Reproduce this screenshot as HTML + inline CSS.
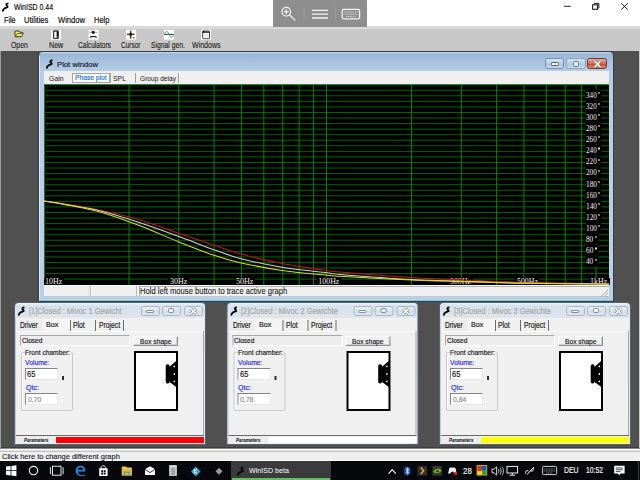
<!DOCTYPE html>
<html><head><meta charset="utf-8">
<style>
*{margin:0;padding:0;box-sizing:border-box}
html,body{width:640px;height:480px;overflow:hidden;background:#fff}
body{position:relative;font-family:"Liberation Sans",sans-serif;font-size:8px;color:#000}
.a{position:absolute}
.t{position:absolute;white-space:nowrap;line-height:1;transform-origin:0 0}
svg{overflow:visible}
</style></head><body>
<!-- toolbar -->
<div class="a" style="left:0;top:26px;width:640px;height:3px;background:#d9d9d9"></div>
<div class="a" style="left:0;top:29px;width:640px;height:22px;background:#c8c8c8"></div>
<!-- MDI -->
<div class="a" style="left:0;top:51px;width:640px;height:397px;background:#505050"></div>
<div class="a" style="left:0;top:447px;width:640px;height:1px;background:#3e3e3e"></div>
<div class="a" style="left:0;top:51px;width:1px;height:397px;background:#9c9c9c"></div>
<div class="a" style="left:638.5px;top:51px;width:1.5px;height:397px;background:#c8c8c8"></div>
<div class="a" style="left:0;top:448px;width:640px;height:1px;background:#8a8a8a"></div>
<div class="a" style="left:0;top:449px;width:640px;height:1px;background:#fcfcfc"></div>
<div class="a" style="left:0;top:450px;width:640px;height:1px;background:#e4e4e4"></div>
<div class="a" style="left:0;top:451px;width:640px;height:1px;background:#c2c2c2"></div>
<div class="a" style="left:0;top:452px;width:640px;height:8px;background:#efefef"></div>
<div class="a" style="left:0;top:460px;width:640px;height:1px;background:#fafafa"></div>
<!-- taskbar -->
<div class="a" style="left:0;top:461px;width:640px;height:19px;background:#06080c"></div>
<div class="a" style="left:231px;top:461px;width:100px;height:19px;background:#3b3b3d"></div>
<div class="a" style="left:232px;top:478px;width:98px;height:2px;background:#60c060"></div>
<!-- title icon -->
<svg class="a" style="left:0;top:0" width="12" height="14"><path d="M7.7,3.5 C6.3,3.6 6.0,4.8 6.6,5.4 C7.6,6.1 8.3,6.6 7.3,7.3 C6.3,7.9 4.7,7.9 3.9,8.8 C3.3,9.4 3.0,10.2 2.9,10.8" fill="none" stroke="#000" stroke-width="1.75" stroke-linecap="round"/></svg>
<!-- magnifier overlay -->
<div class="a" style="left:273px;top:0;width:93.5px;height:26.5px;background:#8e8e8e"></div>
<svg class="a" style="left:273px;top:0" width="94" height="27">
 <circle cx="13.3" cy="11.7" r="4.3" fill="none" stroke="#f2f2f2" stroke-width="1.2"/>
 <path d="M16.4,14.8 L22.3,20.6 M13.3,9.3V14.1 M10.9,11.7H15.7" stroke="#f2f2f2" stroke-width="1.2"/>
 <path d="M31.1,7V20 M62.6,7V20" stroke="#9c9c9c" stroke-width="1"/>
 <path d="M39,10.3H55 M39,14.1H55 M39,18H55" stroke="#f2f2f2" stroke-width="1.3"/>
 <rect x="69.2" y="9.4" width="17.4" height="9.4" rx="1.5" fill="none" stroke="#f2f2f2" stroke-width="1.3"/>
 <path d="M71.5,12H84.5 M71.5,14.2H84.5 M73,16.4H83" stroke="#e8e8e8" stroke-width="0.9" stroke-dasharray="1 0.7"/>
</svg>
<!-- window controls -->
<svg class="a" style="left:556px;top:0" width="84" height="14">
 <path d="M8,6.3H14.7" stroke="#202020" stroke-width="1"/>
 <rect x="36.6" y="4.8" width="4.9" height="4.5" fill="none" stroke="#202020" stroke-width="1.1"/>
 <path d="M38.2,4.4V3.4H42.9V8H41.8" fill="none" stroke="#202020" stroke-width="1"/>
 <path d="M65.2,3.2L71.8,9.6 M71.8,3.2L65.2,9.6" stroke="#202020" stroke-width="1"/>
</svg>
<!-- toolbar icons -->
<svg class="a" style="left:0;top:26px" width="230" height="16">
 <!-- open folder -->
 <path d="M14.8,5.6 L16.6,4.8 L19.2,5.2 L19.8,6.2 L22.8,6.4 L21.6,10.6 L15.2,10.8 Z" fill="#e8e060" stroke="#303010" stroke-width="0.9"/>
 <path d="M15.4,10.6 L17.4,7.6 L23.4,7.6 L21.6,10.6Z" fill="#f0ec70" stroke="#404010" stroke-width="0.7"/>
 <!-- new -->
 <rect x="51.2" y="3.9" width="9.8" height="9.8" fill="#fff"/>
 <rect x="53" y="4.3" width="5.9" height="8.7" rx="1" fill="#3a3a3a"/>
 <rect x="54.2" y="5.8" width="2.4" height="6" fill="#fafafa"/>
 <rect x="57" y="5.9" width="1.3" height="3.8" fill="#000"/>
 <!-- calculators -->
 <rect x="88.6" y="4" width="9.9" height="9.6" fill="#fff"/>
 <path d="M89.5,6.2H97.4" stroke="#404040" stroke-width="0.9" stroke-dasharray="1.1 0.9"/>
 <ellipse cx="93.2" cy="6.3" rx="1.5" ry="1.6" fill="#181818"/>
 <path d="M89.8,11.5 L91.2,10.6 H95.2 L96.8,11.5" fill="none" stroke="#202020" stroke-width="1.2"/>
 <!-- cursor -->
 <rect x="126" y="3.9" width="10.1" height="9.8" fill="#fff"/>
 <path d="M130.7,4.8V12.5 M127,8.3H134.5" stroke="#d8b060" stroke-width="2.2" opacity="0.55"/>
 <path d="M130.7,4.8V12.5 M127,8.3H134.5" stroke="#181818" stroke-width="1.1"/>
 <rect x="129.4" y="7" width="2.6" height="2.6" fill="#282010"/>
 <rect x="133" y="11.2" width="1.6" height="1.3" fill="#c02040"/>
 <!-- signal gen -->
 <rect x="163.9" y="3.9" width="10" height="9.7" fill="#fff"/>
 <path d="M164.3,8.4H173.6" stroke="#202020" stroke-width="0.9"/>
 <path d="M164.5,8.4 C165.5,4.5 167.5,4.5 169,8.4 C170.5,12.3 172.5,12.3 173.5,8.4" fill="none" stroke="#30a050" stroke-width="1"/>
 <!-- windows -->
 <rect x="201" y="3.8" width="10" height="10.1" fill="#fff"/>
 <rect x="202.7" y="5.1" width="6.8" height="7.6" rx="0.8" fill="#ececec" stroke="#3a3a3a" stroke-width="1"/>
 <rect x="202.6" y="4.9" width="7" height="2.2" fill="#505050"/>
 <circle cx="203.4" cy="5.6" r="0.8" fill="#000"/>
 <rect x="203.9" y="7.6" width="4.4" height="4.2" fill="none" stroke="#fff" stroke-width="0.6"/>
</svg>

<!-- plot window frame -->
<div class="a" style="left:38px;top:51px;width:576px;height:251px;background:#3a3f45;border-radius:5px 5px 0 0"></div>
<div class="a" style="left:39px;top:52px;width:574px;height:249px;background:linear-gradient(#c6daee 0px,#9bb7d7 2px,#b6cde6 19px,#b8d0e8 100%);border-radius:4px 4px 0 0"></div>
<div class="a" style="left:40px;top:300px;width:573px;height:1px;background:#74cde8"></div>
<div class="a" style="left:39px;top:56px;width:1px;height:244px;background:#dcecfc"></div>
<svg class="a" style="left:43.7px;top:57.3px" width="12" height="14"><path d="M7.7,3.5 C6.3,3.6 6.0,4.8 6.6,5.4 C7.6,6.1 8.3,6.6 7.3,7.3 C6.3,7.9 4.7,7.9 3.9,8.8 C3.3,9.4 3.0,10.2 2.9,10.8" fill="none" stroke="#000" stroke-width="1.8" stroke-linecap="round"/></svg>
<!-- title buttons plot window -->
<div class="a" style="left:545.4px;top:58.2px;width:19px;height:11.2px;border:1px solid #7890a8;border-radius:2.5px;background:linear-gradient(#d8e6f2,#b4cce4 50%,#a4c0dc 51%,#c0d8ee)"></div>
<div class="a" style="left:566.4px;top:58.2px;width:19.2px;height:11.2px;border:1px solid #8ca4bc;border-radius:2.5px;background:linear-gradient(#cfdff0,#b8d0e8 50%,#aac4e0 51%,#c4dcf0)"></div>
<div class="a" style="left:587.2px;top:58.2px;width:20px;height:11.2px;border:1px solid #6a3a30;border-radius:2.5px;background:linear-gradient(#eaa898,#d86e58 50%,#c84028 51%,#e08a70)"></div>
<div class="a" style="left:551px;top:62.4px;width:8px;height:3.2px;background:#fff;border:0.8px solid #5a6878;border-radius:1.2px"></div>
<div class="a" style="left:572.6px;top:61px;width:6.6px;height:5.6px;background:#e4ecf4;border:1.3px solid #687480;border-radius:1.5px"></div>
<svg class="a" style="left:587px;top:58px" width="21" height="12"><path d="M7.4,2.9L13.6,9.1 M13.6,2.9L7.4,9.1" stroke="#7a3028" stroke-width="3" opacity="0.6"/><path d="M7.4,2.9L13.6,9.1 M13.6,2.9L7.4,9.1" stroke="#ffffff" stroke-width="1.8"/></svg>
<!-- tab strip -->
<div class="a" style="left:44px;top:70.6px;width:565px;height:13.4px;background:#efefef"></div>
<div class="a" style="left:71.8px;top:73.2px;width:38.4px;height:9.8px;background:#fff;border:1px solid #a6a6a6"></div>
<div class="a" style="left:110.4px;top:72.5px;width:1px;height:10.5px;background:#a8a8a8"></div>
<div class="a" style="left:135.2px;top:72.5px;width:1.2px;height:10.5px;background:#a0a0a0"></div>
<div class="a" style="left:178px;top:72.5px;width:1.2px;height:10.5px;background:#a0a0a0"></div>
<svg class="a" style="left:44px;top:84px" width="565" height="201" viewBox="0 0 565 201">
<rect x="0" y="0" width="565" height="201" fill="#000"/>
<path d="M0.5,0V201" stroke="#2a6a4a" stroke-width="1"/>
<path d="M0,0.70H565 M0,6.26H565 M0,11.81H565 M0,17.37H565 M0,22.92H565 M0,28.48H565 M0,34.03H565 M0,39.59H565 M0,45.14H565 M0,50.70H565 M0,56.26H565 M0,61.81H565 M0,67.37H565 M0,72.92H565 M0,78.48H565 M0,84.03H565 M0,89.59H565 M0,95.14H565 M0,100.70H565 M0,106.26H565 M0,111.81H565 M0,117.37H565 M0,122.92H565 M0,128.48H565 M0,134.03H565 M0,139.59H565 M0,145.14H565 M0,150.70H565 M0,156.26H565 M0,161.81H565 M0,167.37H565 M0,172.92H565 M0,178.48H565 M0,184.03H565 M0,189.59H565 M0,195.14H565" stroke="#006800" stroke-width="1" fill="none"/>
<path d="M85.04,0V201 M134.79,0V201 M170.08,0V201 M197.46,0V201 M219.83,0V201 M238.74,0V201 M255.12,0V201 M269.57,0V201 M282.50,0V201 M367.54,0V201 M417.29,0V201 M452.58,0V201 M479.96,0V201 M502.33,0V201 M521.24,0V201 M537.62,0V201 M552.07,0V201" stroke="#0a800a" stroke-width="1" fill="none"/>
<path d="M0,0.5H565" stroke="#1c8c1c" stroke-width="1"/>
<rect x="541.8" y="5.31" width="15.5" height="10.4" fill="#000"/>
<rect x="541.8" y="16.42" width="15.5" height="10.4" fill="#000"/>
<rect x="541.8" y="27.53" width="15.5" height="10.4" fill="#000"/>
<rect x="541.8" y="38.64" width="15.5" height="10.4" fill="#000"/>
<rect x="541.8" y="49.76" width="15.5" height="10.4" fill="#000"/>
<rect x="541.8" y="60.87" width="15.5" height="10.4" fill="#000"/>
<rect x="541.8" y="71.98" width="15.5" height="10.4" fill="#000"/>
<rect x="541.8" y="83.09" width="15.5" height="10.4" fill="#000"/>
<rect x="541.8" y="94.20" width="15.5" height="10.4" fill="#000"/>
<rect x="541.8" y="105.31" width="15.5" height="10.4" fill="#000"/>
<rect x="541.8" y="116.42" width="15.5" height="10.4" fill="#000"/>
<rect x="541.8" y="127.53" width="15.5" height="10.4" fill="#000"/>
<rect x="541.8" y="138.64" width="15.5" height="10.4" fill="#000"/>
<rect x="541.8" y="149.76" width="12.5" height="10.4" fill="#000"/>
<rect x="541.8" y="160.87" width="12.5" height="10.4" fill="#000"/>
<rect x="541.8" y="171.98" width="12.5" height="10.4" fill="#000"/>
</svg><div class="a" style="left:43.5px;top:278px;width:20.4px;height:6.5px;background:#000"></div>
<div class="a" style="left:168.2px;top:278px;width:20.7px;height:6.5px;background:#000"></div>
<div class="a" style="left:234.6px;top:278px;width:20.8px;height:6.5px;background:#000"></div>
<div class="a" style="left:317.0px;top:278px;width:24.2px;height:6.5px;background:#000"></div>
<div class="a" style="left:448.5px;top:278px;width:24.3px;height:6.5px;background:#000"></div>
<div class="a" style="left:515.0px;top:278px;width:24.3px;height:6.5px;background:#000"></div>
<div class="a" style="left:589.0px;top:278px;width:20.5px;height:6.5px;background:#000"></div>
<div class="t" style="left:44.86px;top:278px;font-size:7.88px;font-family:'Liberation Serif',serif;transform:scaleX(1.009);color:#f4f0e8;">10Hz</div>
<div class="t" style="left:169.88px;top:278px;font-size:7.88px;font-family:'Liberation Serif',serif;transform:scaleX(1.008);color:#f4f0e8;">30Hz</div>
<div class="t" style="left:236.2px;top:278px;font-size:7.88px;font-family:'Liberation Serif',serif;transform:scaleX(1.019);color:#f4f0e8;">50Hz</div>
<div class="t" style="left:318.37px;top:278px;font-size:7.88px;font-family:'Liberation Serif',serif;color:#f4f0e8;">100Hz</div>
<div class="t" style="left:450.19px;top:278px;font-size:7.88px;font-family:'Liberation Serif',serif;transform:scaleX(0.99);color:#f4f0e8;">300Hz</div>
<div class="t" style="left:516.61px;top:278px;font-size:7.88px;font-family:'Liberation Serif',serif;transform:scaleX(0.994);color:#f4f0e8;">500Hz</div>
<div class="t" style="left:590.36px;top:278px;font-size:7.88px;font-family:'Liberation Serif',serif;transform:scaleX(1.015);color:#f4f0e8;">1kHz</div>
<div class="t" style="left:586.21px;top:91px;font-size:8.56px;font-family:'Liberation Serif',serif;transform:scaleX(0.837);color:#f4f0e8;">340</div>
<div class="t" style="left:586.21px;top:102px;font-size:8.56px;font-family:'Liberation Serif',serif;transform:scaleX(0.837);color:#f4f0e8;">320</div>
<div class="t" style="left:586.21px;top:113px;font-size:8.56px;font-family:'Liberation Serif',serif;transform:scaleX(0.837);color:#f4f0e8;">300</div>
<div class="t" style="left:586.21px;top:124px;font-size:8.56px;font-family:'Liberation Serif',serif;transform:scaleX(0.837);color:#f4f0e8;">280</div>
<div class="t" style="left:586.21px;top:135px;font-size:8.56px;font-family:'Liberation Serif',serif;transform:scaleX(0.837);color:#f4f0e8;">260</div>
<div class="t" style="left:586.21px;top:146px;font-size:8.56px;font-family:'Liberation Serif',serif;transform:scaleX(0.837);color:#f4f0e8;">240</div>
<div class="t" style="left:586.21px;top:157px;font-size:8.56px;font-family:'Liberation Serif',serif;transform:scaleX(0.837);color:#f4f0e8;">220</div>
<div class="t" style="left:586.21px;top:168px;font-size:8.56px;font-family:'Liberation Serif',serif;transform:scaleX(0.837);color:#f4f0e8;">200</div>
<div class="t" style="left:585.91px;top:180px;font-size:8.56px;font-family:'Liberation Serif',serif;transform:scaleX(0.861);color:#f4f0e8;">180</div>
<div class="t" style="left:585.91px;top:191px;font-size:8.56px;font-family:'Liberation Serif',serif;transform:scaleX(0.861);color:#f4f0e8;">160</div>
<div class="t" style="left:585.91px;top:202px;font-size:8.56px;font-family:'Liberation Serif',serif;transform:scaleX(0.861);color:#f4f0e8;">140</div>
<div class="t" style="left:585.91px;top:213px;font-size:8.56px;font-family:'Liberation Serif',serif;transform:scaleX(0.861);color:#f4f0e8;">120</div>
<div class="t" style="left:585.91px;top:224px;font-size:8.56px;font-family:'Liberation Serif',serif;transform:scaleX(0.861);color:#f4f0e8;">100</div>
<div class="t" style="left:586.28px;top:235px;font-size:8.56px;font-family:'Liberation Serif',serif;transform:scaleX(0.845);color:#f4f0e8;">80</div>
<div class="t" style="left:586.21px;top:246px;font-size:8.56px;font-family:'Liberation Serif',serif;transform:scaleX(0.854);color:#f4f0e8;">60</div>
<div class="t" style="left:586.43px;top:257px;font-size:8.56px;font-family:'Liberation Serif',serif;transform:scaleX(0.827);color:#f4f0e8;">40</div><div class="a" style="left:598.0px;top:91.8px;width:2.2px;height:2.2px;border-radius:50%;border:0.6px solid #d8d8d8"></div>
<div class="a" style="left:598.0px;top:102.9px;width:2.2px;height:2.2px;border-radius:50%;border:0.6px solid #d8d8d8"></div>
<div class="a" style="left:598.0px;top:114.0px;width:2.2px;height:2.2px;border-radius:50%;border:0.6px solid #d8d8d8"></div>
<div class="a" style="left:598.0px;top:125.1px;width:2.2px;height:2.2px;border-radius:50%;border:0.6px solid #d8d8d8"></div>
<div class="a" style="left:598.0px;top:136.3px;width:2.2px;height:2.2px;border-radius:50%;border:0.6px solid #d8d8d8"></div>
<div class="a" style="left:598.0px;top:147.4px;width:2.2px;height:2.2px;border-radius:50%;border:0.6px solid #d8d8d8"></div>
<div class="a" style="left:598.0px;top:158.5px;width:2.2px;height:2.2px;border-radius:50%;border:0.6px solid #d8d8d8"></div>
<div class="a" style="left:598.0px;top:169.6px;width:2.2px;height:2.2px;border-radius:50%;border:0.6px solid #d8d8d8"></div>
<div class="a" style="left:598.0px;top:180.7px;width:2.2px;height:2.2px;border-radius:50%;border:0.6px solid #d8d8d8"></div>
<div class="a" style="left:598.0px;top:191.8px;width:2.2px;height:2.2px;border-radius:50%;border:0.6px solid #d8d8d8"></div>
<div class="a" style="left:598.0px;top:202.9px;width:2.2px;height:2.2px;border-radius:50%;border:0.6px solid #d8d8d8"></div>
<div class="a" style="left:598.0px;top:214.0px;width:2.2px;height:2.2px;border-radius:50%;border:0.6px solid #d8d8d8"></div>
<div class="a" style="left:598.0px;top:225.1px;width:2.2px;height:2.2px;border-radius:50%;border:0.6px solid #d8d8d8"></div>
<div class="a" style="left:594.5px;top:236.3px;width:2.2px;height:2.2px;border-radius:50%;border:0.6px solid #d8d8d8"></div>
<div class="a" style="left:594.5px;top:247.4px;width:2.2px;height:2.2px;border-radius:50%;border:0.6px solid #d8d8d8"></div>
<div class="a" style="left:594.5px;top:258.5px;width:2.2px;height:2.2px;border-radius:50%;border:0.6px solid #d8d8d8"></div>

<svg class="a" style="left:44px;top:84px;overflow:hidden" width="565" height="201" viewBox="0 0 565 201">
<path d="M0.0,116.9 C4.3,117.6 16.2,119.2 26.0,120.8 C35.8,122.5 46.8,124.3 58.5,126.8 C70.2,129.3 83.2,132.2 96.0,136.0 C108.8,139.8 122.7,145.2 135.0,149.4 C147.3,153.6 159.8,157.8 170.0,161.2 C180.2,164.6 184.7,166.7 196.0,169.8 C207.3,172.8 223.5,176.6 238.0,179.4 C252.5,182.2 273.3,185.1 283.0,186.5 C292.7,187.9 282.0,186.8 296.0,188.0 C310.0,189.2 347.0,192.2 367.0,193.5 C387.0,194.8 397.8,195.0 416.0,195.8 C434.2,196.6 451.2,197.5 476.0,198.2 C500.8,198.9 550.2,199.5 565.0,199.8" stroke="#c41414" stroke-width="1.05" fill="none"/>
<path d="M0.0,116.9 C4.3,117.6 16.2,119.4 26.0,121.2 C35.8,123.0 46.8,124.6 58.5,127.5 C70.2,130.4 83.2,134.6 96.0,138.8 C108.8,143.0 122.7,148.1 135.0,152.6 C147.3,157.1 159.8,162.2 170.0,165.8 C180.2,169.4 184.7,171.5 196.0,174.4 C207.3,177.3 223.5,180.9 238.0,183.3 C252.5,185.7 273.3,187.6 283.0,188.8 C292.7,190.0 282.0,189.3 296.0,190.4 C310.0,191.5 347.0,194.3 367.0,195.4 C387.0,196.5 397.8,196.6 416.0,197.2 C434.2,197.8 451.2,198.5 476.0,199.0 C500.8,199.5 550.2,199.8 565.0,200.0" stroke="#d0d0d8" stroke-width="1.05" fill="none"/>
<path d="M0.0,116.9 C4.3,117.7 16.2,119.6 26.0,121.6 C35.8,123.6 46.8,125.3 58.5,128.7 C70.2,132.1 83.2,136.9 96.0,141.8 C108.8,146.7 122.7,153.1 135.0,158.0 C147.3,162.9 159.8,167.9 170.0,171.3 C180.2,174.8 184.7,176.2 196.0,178.7 C207.3,181.2 223.5,184.4 238.0,186.5 C252.5,188.6 273.3,190.2 283.0,191.2 C292.7,192.2 282.0,191.5 296.0,192.3 C310.0,193.1 347.0,195.1 367.0,196.0 C387.0,196.9 397.8,197.1 416.0,197.6 C434.2,198.1 451.2,198.8 476.0,199.2 C500.8,199.6 550.2,200.0 565.0,200.2" stroke="#dcdc10" stroke-width="1.05" fill="none"/>
</svg>
<!-- status of plot window -->
<div class="a" style="left:44px;top:284.8px;width:565px;height:12px;background:#f0f0f0"></div>
<div class="a" style="left:44px;top:285px;width:565px;height:1px;background:#fafafa"></div>
<div class="a" style="left:44px;top:296px;width:565px;height:1px;background:#c8c8c8"></div>
<div class="a" style="left:88.2px;top:286px;width:1px;height:10px;background:#e6e6e6"></div>
<div class="a" style="left:90px;top:286px;width:1px;height:10px;background:#b4b4b4"></div>
<div class="a" style="left:91px;top:286px;width:1px;height:10px;background:#fcfcfc"></div>
<div class="a" style="left:136.4px;top:286px;width:1px;height:10px;background:#b4b4b4"></div>
<div class="a" style="left:137.4px;top:286px;width:1px;height:10px;background:#fcfcfc"></div>
<div class="a" style="left:138.6px;top:286px;width:1px;height:10px;background:#a8a8a8"></div>
<div class="a" style="left:138.6px;top:285.6px;width:470px;height:1px;background:#b0b0b0"></div>
<svg class="a" style="left:598px;top:287px" width="11" height="10"><path d="M10,3L3,10 M10,6L6,10 M10,9L9,10" stroke="#a0a0a0" stroke-width="0.9"/></svg>

<div class="a" style="left:0;top:0;width:640px;height:480px;transform:translateX(0px)">
<div class="a" style="left:14px;top:302px;width:192px;height:143px;background:#5a636c;border-radius:4px 4px 0 0"></div>
<div class="a" style="left:14.6px;top:302.6px;width:190.8px;height:141.8px;background:linear-gradient(#eef2f6 0px,#d7e1eb 3px,#dde6ef 15px,#e2eaf2 100%);border-radius:3.5px 3.5px 0 0"></div>
<svg class="a" style="left:15.8px;top:304px" width="12" height="14"><path d="M7.7,3.5 C6.3,3.6 6.0,4.8 6.6,5.4 C7.6,6.1 8.3,6.6 7.3,7.3 C6.3,7.9 4.7,7.9 3.9,8.8 C3.3,9.4 3.0,10.2 2.9,10.8" fill="none" stroke="#000" stroke-width="1.8" stroke-linecap="round"/></svg>
<div class="a" style="left:140.6px;top:305.5px;width:19.8px;height:10.4px;border:1px solid #a8b6c6;border-radius:2.5px;background:linear-gradient(#e8eef4,#d8e2ec 50%,#d0dce8 51%,#dce6f0)"></div>
<div class="a" style="left:162.25px;top:305.5px;width:19px;height:10.4px;border:1px solid #a8b6c6;border-radius:2.5px;background:linear-gradient(#e8eef4,#d8e2ec 50%,#d0dce8 51%,#dce6f0)"></div>
<div class="a" style="left:183.5px;top:305.5px;width:19px;height:10.4px;border:1px solid #a8b6c6;border-radius:2.5px;background:linear-gradient(#e8eef4,#d8e2ec 50%,#d0dce8 51%,#dce6f0)"></div>
<div class="a" style="left:146.4px;top:309.8px;width:7.4px;height:2.8px;background:#fafafa;border:0.8px solid #909090;border-radius:1px"></div>
<div class="a" style="left:168.1px;top:307.7px;width:5.8px;height:5.5px;background:#f0f0f0;border:1.3px solid #8a8a8a;border-radius:1.5px"></div>
<svg class="a" style="left:183.5px;top:305.5px" width="19" height="11"><path d="M6.6,2.4L12.2,8 M12.2,2.4L6.6,8" stroke="#8c8c8c" stroke-width="3"/><path d="M6.6,2.4L12.2,8 M12.2,2.4L6.6,8" stroke="#fafafa" stroke-width="1.5" /></svg>
<div class="a" style="left:16px;top:318px;width:188px;height:125px;background:#f0f0f0"></div>
<div class="a" style="left:15.2px;top:318px;width:1px;height:125px;background:#c4ccd4"></div>
<div class="a" style="left:18.2px;top:320.1px;width:24px;height:10.8px;background:#ebebeb"></div>
<div class="a" style="left:43px;top:319.2px;width:26.6px;height:12px;background:#f4f4f4"></div>
<div class="a" style="left:69.8px;top:319.5px;width:1px;height:11.2px;background:#6c6c6c"></div>
<div class="a" style="left:95.0px;top:319.5px;width:1px;height:11.2px;background:#6c6c6c"></div>
<div class="a" style="left:122.8px;top:319.5px;width:1px;height:11.2px;background:#6c6c6c"></div>
<div class="a" style="left:16px;top:330.6px;width:188px;height:0.8px;background:#fafafa"></div>
<div class="a" style="left:203.2px;top:331px;width:0.9px;height:104px;background:#a8a8a8"></div>
<div class="a" style="left:20.2px;top:335.4px;width:110.2px;height:10.2px;background:#ececec;border-top:1px solid #a8a8a8;border-left:1px solid #a8a8a8;border-right:1px solid #ffffff;border-bottom:1px solid #ffffff"></div>
<div class="a" style="left:133.1px;top:335.5px;width:44.6px;height:10.5px;background:#f0f0f0;border-top:1px solid #ffffff;border-left:1px solid #ffffff;border-right:1.2px solid #909090;border-bottom:1.2px solid #909090;box-shadow:inset -1px -1px 0 #d0d0d0"></div>
<div class="a" style="left:20.6px;top:351.5px;width:52.4px;height:59.2px;border:1px solid #c8c8c8;border-radius:2px;box-shadow:inset 1px 1px 0 #fff"></div>
<div class="a" style="left:24.6px;top:349px;width:46.6px;height:6px;background:#f0f0f0"></div>
<div class="a" style="left:25.4px;top:368.2px;width:32.7px;height:12.2px;background:#fff;border-top:1.5px solid #858585;border-left:1.5px solid #858585;border-right:1px solid #e8e8e8;border-bottom:1px solid #e8e8e8"></div>
<div class="a" style="left:25.4px;top:393.4px;width:32.7px;height:11.8px;background:#fff;border-top:1.5px solid #858585;border-left:1.5px solid #858585;border-right:1px solid #e8e8e8;border-bottom:1px solid #e8e8e8"></div>
<div class="a" style="left:62.2px;top:375.8px;width:1.4px;height:4px;background:#303030"></div>
<div class="a" style="left:133.5px;top:351px;width:44.4px;height:59.7px;background:#fff;border:2px solid #000"></div>
<svg class="a" style="left:133.5px;top:351px" width="45" height="60"><rect x="31.7" y="13.2" width="3.8" height="19.2" rx="1.7" fill="#000"/><path d="M34.6,17.2 L36,15.2 L42.8,9.6 L42.8,36.6 L36,31.2 L34.6,29.0Z" fill="#000"/><path d="M39.0,15.4 L41.0,14.2 V16.6Z M39.0,23 L41.0,21.8 V24.2Z M39.0,30.4 L41.0,29.2 V31.6Z" fill="#fff"/></svg>
<div class="a" style="left:16px;top:435px;width:188px;height:1px;background:#6a6a6a"></div>
<div class="a" style="left:16px;top:436.2px;width:40px;height:6.6px;background:#ececec"></div>
<div class="a" style="left:56.1px;top:436.6px;width:147.7px;height:6.2px;background:#ff0000"></div>
</div>
<div class="a" style="left:0;top:0;width:640px;height:480px;transform:translateX(212.5px)">
<div class="a" style="left:14px;top:302px;width:192px;height:143px;background:#5a636c;border-radius:4px 4px 0 0"></div>
<div class="a" style="left:14.6px;top:302.6px;width:190.8px;height:141.8px;background:linear-gradient(#eef2f6 0px,#d7e1eb 3px,#dde6ef 15px,#e2eaf2 100%);border-radius:3.5px 3.5px 0 0"></div>
<svg class="a" style="left:15.8px;top:304px" width="12" height="14"><path d="M7.7,3.5 C6.3,3.6 6.0,4.8 6.6,5.4 C7.6,6.1 8.3,6.6 7.3,7.3 C6.3,7.9 4.7,7.9 3.9,8.8 C3.3,9.4 3.0,10.2 2.9,10.8" fill="none" stroke="#000" stroke-width="1.8" stroke-linecap="round"/></svg>
<div class="a" style="left:140.6px;top:305.5px;width:19.8px;height:10.4px;border:1px solid #a8b6c6;border-radius:2.5px;background:linear-gradient(#e8eef4,#d8e2ec 50%,#d0dce8 51%,#dce6f0)"></div>
<div class="a" style="left:162.25px;top:305.5px;width:19px;height:10.4px;border:1px solid #a8b6c6;border-radius:2.5px;background:linear-gradient(#e8eef4,#d8e2ec 50%,#d0dce8 51%,#dce6f0)"></div>
<div class="a" style="left:183.5px;top:305.5px;width:19px;height:10.4px;border:1px solid #a8b6c6;border-radius:2.5px;background:linear-gradient(#e8eef4,#d8e2ec 50%,#d0dce8 51%,#dce6f0)"></div>
<div class="a" style="left:146.4px;top:309.8px;width:7.4px;height:2.8px;background:#fafafa;border:0.8px solid #909090;border-radius:1px"></div>
<div class="a" style="left:168.1px;top:307.7px;width:5.8px;height:5.5px;background:#f0f0f0;border:1.3px solid #8a8a8a;border-radius:1.5px"></div>
<svg class="a" style="left:183.5px;top:305.5px" width="19" height="11"><path d="M6.6,2.4L12.2,8 M12.2,2.4L6.6,8" stroke="#8c8c8c" stroke-width="3"/><path d="M6.6,2.4L12.2,8 M12.2,2.4L6.6,8" stroke="#fafafa" stroke-width="1.5" /></svg>
<div class="a" style="left:16px;top:318px;width:188px;height:125px;background:#f0f0f0"></div>
<div class="a" style="left:15.2px;top:318px;width:1px;height:125px;background:#c4ccd4"></div>
<div class="a" style="left:18.2px;top:320.1px;width:24px;height:10.8px;background:#ebebeb"></div>
<div class="a" style="left:43px;top:319.2px;width:26.6px;height:12px;background:#f4f4f4"></div>
<div class="a" style="left:69.8px;top:319.5px;width:1px;height:11.2px;background:#6c6c6c"></div>
<div class="a" style="left:95.0px;top:319.5px;width:1px;height:11.2px;background:#6c6c6c"></div>
<div class="a" style="left:122.8px;top:319.5px;width:1px;height:11.2px;background:#6c6c6c"></div>
<div class="a" style="left:16px;top:330.6px;width:188px;height:0.8px;background:#fafafa"></div>
<div class="a" style="left:203.2px;top:331px;width:0.9px;height:104px;background:#a8a8a8"></div>
<div class="a" style="left:20.2px;top:335.4px;width:110.2px;height:10.2px;background:#ececec;border-top:1px solid #a8a8a8;border-left:1px solid #a8a8a8;border-right:1px solid #ffffff;border-bottom:1px solid #ffffff"></div>
<div class="a" style="left:133.1px;top:335.5px;width:44.6px;height:10.5px;background:#f0f0f0;border-top:1px solid #ffffff;border-left:1px solid #ffffff;border-right:1.2px solid #909090;border-bottom:1.2px solid #909090;box-shadow:inset -1px -1px 0 #d0d0d0"></div>
<div class="a" style="left:20.6px;top:351.5px;width:52.4px;height:59.2px;border:1px solid #c8c8c8;border-radius:2px;box-shadow:inset 1px 1px 0 #fff"></div>
<div class="a" style="left:24.6px;top:349px;width:46.6px;height:6px;background:#f0f0f0"></div>
<div class="a" style="left:25.4px;top:368.2px;width:32.7px;height:12.2px;background:#fff;border-top:1.5px solid #858585;border-left:1.5px solid #858585;border-right:1px solid #e8e8e8;border-bottom:1px solid #e8e8e8"></div>
<div class="a" style="left:25.4px;top:393.4px;width:32.7px;height:11.8px;background:#fff;border-top:1.5px solid #858585;border-left:1.5px solid #858585;border-right:1px solid #e8e8e8;border-bottom:1px solid #e8e8e8"></div>
<div class="a" style="left:62.2px;top:375.8px;width:1.4px;height:4px;background:#303030"></div>
<div class="a" style="left:133.5px;top:351px;width:44.4px;height:59.7px;background:#fff;border:2px solid #000"></div>
<svg class="a" style="left:133.5px;top:351px" width="45" height="60"><rect x="31.7" y="13.2" width="3.8" height="19.2" rx="1.7" fill="#000"/><path d="M34.6,17.2 L36,15.2 L42.8,9.6 L42.8,36.6 L36,31.2 L34.6,29.0Z" fill="#000"/><path d="M39.0,15.4 L41.0,14.2 V16.6Z M39.0,23 L41.0,21.8 V24.2Z M39.0,30.4 L41.0,29.2 V31.6Z" fill="#fff"/></svg>
<div class="a" style="left:16px;top:435px;width:188px;height:1px;background:#6a6a6a"></div>
<div class="a" style="left:16px;top:436.2px;width:40px;height:6.6px;background:#ececec"></div>
<div class="a" style="left:56.1px;top:436.6px;width:147.7px;height:6.2px;background:#ffffff"></div>
</div>
<div class="a" style="left:0;top:0;width:640px;height:480px;transform:translateX(425px)">
<div class="a" style="left:14px;top:302px;width:192px;height:143px;background:#5a636c;border-radius:4px 4px 0 0"></div>
<div class="a" style="left:14.6px;top:302.6px;width:190.8px;height:141.8px;background:linear-gradient(#eef2f6 0px,#d7e1eb 3px,#dde6ef 15px,#e2eaf2 100%);border-radius:3.5px 3.5px 0 0"></div>
<svg class="a" style="left:15.8px;top:304px" width="12" height="14"><path d="M7.7,3.5 C6.3,3.6 6.0,4.8 6.6,5.4 C7.6,6.1 8.3,6.6 7.3,7.3 C6.3,7.9 4.7,7.9 3.9,8.8 C3.3,9.4 3.0,10.2 2.9,10.8" fill="none" stroke="#000" stroke-width="1.8" stroke-linecap="round"/></svg>
<div class="a" style="left:140.6px;top:305.5px;width:19.8px;height:10.4px;border:1px solid #a8b6c6;border-radius:2.5px;background:linear-gradient(#e8eef4,#d8e2ec 50%,#d0dce8 51%,#dce6f0)"></div>
<div class="a" style="left:162.25px;top:305.5px;width:19px;height:10.4px;border:1px solid #a8b6c6;border-radius:2.5px;background:linear-gradient(#e8eef4,#d8e2ec 50%,#d0dce8 51%,#dce6f0)"></div>
<div class="a" style="left:183.5px;top:305.5px;width:19px;height:10.4px;border:1px solid #a8b6c6;border-radius:2.5px;background:linear-gradient(#e8eef4,#d8e2ec 50%,#d0dce8 51%,#dce6f0)"></div>
<div class="a" style="left:146.4px;top:309.8px;width:7.4px;height:2.8px;background:#fafafa;border:0.8px solid #909090;border-radius:1px"></div>
<div class="a" style="left:168.1px;top:307.7px;width:5.8px;height:5.5px;background:#f0f0f0;border:1.3px solid #8a8a8a;border-radius:1.5px"></div>
<svg class="a" style="left:183.5px;top:305.5px" width="19" height="11"><path d="M6.6,2.4L12.2,8 M12.2,2.4L6.6,8" stroke="#8c8c8c" stroke-width="3"/><path d="M6.6,2.4L12.2,8 M12.2,2.4L6.6,8" stroke="#fafafa" stroke-width="1.5" /></svg>
<div class="a" style="left:16px;top:318px;width:188px;height:125px;background:#f0f0f0"></div>
<div class="a" style="left:15.2px;top:318px;width:1px;height:125px;background:#c4ccd4"></div>
<div class="a" style="left:18.2px;top:320.1px;width:24px;height:10.8px;background:#ebebeb"></div>
<div class="a" style="left:43px;top:319.2px;width:26.6px;height:12px;background:#f4f4f4"></div>
<div class="a" style="left:69.8px;top:319.5px;width:1px;height:11.2px;background:#6c6c6c"></div>
<div class="a" style="left:95.0px;top:319.5px;width:1px;height:11.2px;background:#6c6c6c"></div>
<div class="a" style="left:122.8px;top:319.5px;width:1px;height:11.2px;background:#6c6c6c"></div>
<div class="a" style="left:16px;top:330.6px;width:188px;height:0.8px;background:#fafafa"></div>
<div class="a" style="left:203.2px;top:331px;width:0.9px;height:104px;background:#a8a8a8"></div>
<div class="a" style="left:20.2px;top:335.4px;width:110.2px;height:10.2px;background:#ececec;border-top:1px solid #a8a8a8;border-left:1px solid #a8a8a8;border-right:1px solid #ffffff;border-bottom:1px solid #ffffff"></div>
<div class="a" style="left:133.1px;top:335.5px;width:44.6px;height:10.5px;background:#f0f0f0;border-top:1px solid #ffffff;border-left:1px solid #ffffff;border-right:1.2px solid #909090;border-bottom:1.2px solid #909090;box-shadow:inset -1px -1px 0 #d0d0d0"></div>
<div class="a" style="left:20.6px;top:351.5px;width:52.4px;height:59.2px;border:1px solid #c8c8c8;border-radius:2px;box-shadow:inset 1px 1px 0 #fff"></div>
<div class="a" style="left:24.6px;top:349px;width:46.6px;height:6px;background:#f0f0f0"></div>
<div class="a" style="left:25.4px;top:368.2px;width:32.7px;height:12.2px;background:#fff;border-top:1.5px solid #858585;border-left:1.5px solid #858585;border-right:1px solid #e8e8e8;border-bottom:1px solid #e8e8e8"></div>
<div class="a" style="left:25.4px;top:393.4px;width:32.7px;height:11.8px;background:#fff;border-top:1.5px solid #858585;border-left:1.5px solid #858585;border-right:1px solid #e8e8e8;border-bottom:1px solid #e8e8e8"></div>
<div class="a" style="left:62.2px;top:375.8px;width:1.4px;height:4px;background:#303030"></div>
<div class="a" style="left:133.5px;top:351px;width:44.4px;height:59.7px;background:#fff;border:2px solid #000"></div>
<svg class="a" style="left:133.5px;top:351px" width="45" height="60"><rect x="31.7" y="13.2" width="3.8" height="19.2" rx="1.7" fill="#000"/><path d="M34.6,17.2 L36,15.2 L42.8,9.6 L42.8,36.6 L36,31.2 L34.6,29.0Z" fill="#000"/><path d="M39.0,15.4 L41.0,14.2 V16.6Z M39.0,23 L41.0,21.8 V24.2Z M39.0,30.4 L41.0,29.2 V31.6Z" fill="#fff"/></svg>
<div class="a" style="left:16px;top:435px;width:188px;height:1px;background:#6a6a6a"></div>
<div class="a" style="left:16px;top:436.2px;width:40px;height:6.6px;background:#ececec"></div>
<div class="a" style="left:56.1px;top:436.6px;width:147.7px;height:6.2px;background:#ffff00"></div>
</div>
<!-- status bar text etc -->
<div class="t" style="left:14.1px;top:4px;font-size:8.26px;transform:scaleX(0.843);color:#101010;-webkit-text-stroke:0.18px #101010;">WinISD 0.44</div>
<div class="t" style="left:4.12px;top:16px;font-size:8.77px;transform:scaleX(0.824);color:#101010;-webkit-text-stroke:0.18px #101010;">File</div>
<div class="t" style="left:24.27px;top:16px;font-size:8.77px;transform:scaleX(0.862);color:#101010;-webkit-text-stroke:0.18px #101010;">Utilities</div>
<div class="t" style="left:57.8px;top:16px;font-size:8.77px;transform:scaleX(0.864);color:#101010;-webkit-text-stroke:0.18px #101010;">Window</div>
<div class="t" style="left:93.6px;top:16px;font-size:8.77px;transform:scaleX(0.858);color:#101010;-webkit-text-stroke:0.18px #101010;">Help</div>
<div class="t" style="left:10.72px;top:41px;font-size:8.7px;transform:scaleX(0.792);color:#1a1a1a;-webkit-text-stroke:0.1px #1a1a1a;">Open</div>
<div class="t" style="left:49.13px;top:41px;font-size:8.7px;transform:scaleX(0.817);color:#1a1a1a;-webkit-text-stroke:0.1px #1a1a1a;">New</div>
<div class="t" style="left:77.57px;top:41px;font-size:8.7px;transform:scaleX(0.757);color:#1a1a1a;-webkit-text-stroke:0.1px #1a1a1a;">Calculators</div>
<div class="t" style="left:121.28px;top:41px;font-size:8.7px;transform:scaleX(0.743);color:#1a1a1a;-webkit-text-stroke:0.1px #1a1a1a;">Cursor</div>
<div class="t" style="left:151.33px;top:41px;font-size:8.7px;transform:scaleX(0.78);color:#1a1a1a;-webkit-text-stroke:0.1px #1a1a1a;">Signal gen.</div>
<div class="t" style="left:192.0px;top:41px;font-size:8.7px;transform:scaleX(0.808);color:#1a1a1a;-webkit-text-stroke:0.1px #1a1a1a;">Windows</div>
<div class="t" style="left:1.83px;top:454px;font-size:7.12px;transform:scaleX(1.047);color:#1c1c2c;-webkit-text-stroke:0.12px #1c1c2c;">Click here to change different graph</div>
<div class="t" style="left:248.5px;top:467px;font-size:8.12px;transform:scaleX(0.877);color:#ffffff;-webkit-text-stroke:0.01px #ffffff;">WinISD beta</div>
<div class="t" style="left:462.51px;top:466px;font-size:9.43px;transform:scaleX(0.837);color:#f0f0f0;-webkit-text-stroke:0.18px #f0f0f0;">28</div>
<div class="t" style="left:563.95px;top:466px;font-size:8.7px;transform:scaleX(0.792);color:#f0f0f0;-webkit-text-stroke:0.18px #f0f0f0;">DEU</div>
<div class="t" style="left:586.22px;top:466px;font-size:8.57px;transform:scaleX(0.797);color:#f0f0f0;-webkit-text-stroke:0.18px #f0f0f0;">10:52</div>
<div class="t" style="left:57.38px;top:61px;font-size:7.83px;transform:scaleX(0.983);color:#182030;-webkit-text-stroke:0.18px #182030;">Plot window</div>
<div class="t" style="left:48.65px;top:75px;font-size:7.39px;transform:scaleX(0.944);color:#202020;">Gain</div>
<div class="t" style="left:74.86px;top:74px;font-size:8.12px;transform:scaleX(0.824);color:#2070d8;-webkit-text-stroke:0.18px #2070d8;">Phase plot</div>
<div class="t" style="left:113.48px;top:75px;font-size:7.97px;transform:scaleX(0.86);color:#202020;">SPL</div>
<div class="t" style="left:139.67px;top:75px;font-size:7.97px;transform:scaleX(0.828);color:#202020;">Group delay</div>
<div class="t" style="left:139.99px;top:287px;font-size:8.7px;transform:scaleX(0.876);color:#181818;-webkit-text-stroke:0.08px #181818;">Hold left mouse button to trace active graph</div>
<div class="t" style="left:28.58px;top:308px;font-size:8.26px;transform:scaleX(0.906);color:#a8a8a8;-webkit-text-stroke:0.18px #a8a8a8;">[1]Closed : Mivoc 1 Gewicht</div>
<div class="t" style="left:27.79px;top:396px;font-size:7.86px;transform:scaleX(0.88);color:#8c8c8c;-webkit-text-stroke:0.18px #8c8c8c;">0,70</div>
<div class="t" style="left:20.47px;top:322px;font-size:8.26px;transform:scaleX(0.809);color:#202020;-webkit-text-stroke:0.18px #202020;">Driver</div>
<div class="t" style="left:46.23px;top:321px;font-size:7.75px;transform:scaleX(0.924);color:#202020;-webkit-text-stroke:0.18px #202020;">Box</div>
<div class="t" style="left:73.16px;top:322px;font-size:8.26px;transform:scaleX(0.824);color:#202020;-webkit-text-stroke:0.18px #202020;">Plot</div>
<div class="t" style="left:98.86px;top:322px;font-size:8.26px;transform:scaleX(0.822);color:#202020;-webkit-text-stroke:0.18px #202020;">Project</div>
<div class="t" style="left:21.77px;top:337px;font-size:7.25px;transform:scaleX(0.904);color:#202020;-webkit-text-stroke:0.18px #202020;">Closed</div>
<div class="t" style="left:139.67px;top:338px;font-size:7.9px;transform:scaleX(0.846);color:#202020;-webkit-text-stroke:0.18px #202020;">Box shape</div>
<div class="t" style="left:25.27px;top:349px;font-size:8.12px;transform:scaleX(0.821);color:#202020;-webkit-text-stroke:0.18px #202020;">Front chamber:</div>
<div class="t" style="left:25.4px;top:359px;font-size:7.97px;transform:scaleX(0.847);color:#2828e8;-webkit-text-stroke:0.18px #2828e8;">Volume:</div>
<div class="t" style="left:27.32px;top:370px;font-size:8.57px;transform:scaleX(0.876);color:#202020;-webkit-text-stroke:0.18px #202020;">65</div>
<div class="t" style="left:25.51px;top:384px;font-size:7.97px;transform:scaleX(0.897);color:#2828e8;-webkit-text-stroke:0.18px #2828e8;">Qtc:</div>
<div class="t" style="left:23.75px;top:438px;font-size:5.07px;transform:scaleX(0.889);color:#101010;font-weight:bold;font-style:italic;-webkit-text-stroke:0.05px #101010;">Parameters</div>
<div class="t" style="left:241.02px;top:308px;font-size:8.26px;transform:scaleX(0.906);color:#a8a8a8;-webkit-text-stroke:0.18px #a8a8a8;">[2]Closed : Mivoc 2 Gewichte</div>
<div class="t" style="left:240.29px;top:396px;font-size:7.86px;transform:scaleX(0.88);color:#8c8c8c;-webkit-text-stroke:0.18px #8c8c8c;">0,78</div>
<div class="t" style="left:232.97px;top:322px;font-size:8.26px;transform:scaleX(0.809);color:#202020;-webkit-text-stroke:0.18px #202020;">Driver</div>
<div class="t" style="left:258.73px;top:321px;font-size:7.75px;transform:scaleX(0.924);color:#202020;-webkit-text-stroke:0.18px #202020;">Box</div>
<div class="t" style="left:285.66px;top:322px;font-size:8.26px;transform:scaleX(0.824);color:#202020;-webkit-text-stroke:0.18px #202020;">Plot</div>
<div class="t" style="left:311.36px;top:322px;font-size:8.26px;transform:scaleX(0.822);color:#202020;-webkit-text-stroke:0.18px #202020;">Project</div>
<div class="t" style="left:234.27px;top:337px;font-size:7.25px;transform:scaleX(0.904);color:#202020;-webkit-text-stroke:0.18px #202020;">Closed</div>
<div class="t" style="left:352.17px;top:338px;font-size:7.9px;transform:scaleX(0.846);color:#202020;-webkit-text-stroke:0.18px #202020;">Box shape</div>
<div class="t" style="left:237.77px;top:349px;font-size:8.12px;transform:scaleX(0.821);color:#202020;-webkit-text-stroke:0.18px #202020;">Front chamber:</div>
<div class="t" style="left:237.9px;top:359px;font-size:7.97px;transform:scaleX(0.847);color:#2828e8;-webkit-text-stroke:0.18px #2828e8;">Volume:</div>
<div class="t" style="left:239.82px;top:370px;font-size:8.57px;transform:scaleX(0.876);color:#202020;-webkit-text-stroke:0.18px #202020;">65</div>
<div class="t" style="left:238.01px;top:384px;font-size:7.97px;transform:scaleX(0.897);color:#2828e8;-webkit-text-stroke:0.18px #2828e8;">Qtc:</div>
<div class="t" style="left:236.25px;top:438px;font-size:5.07px;transform:scaleX(0.889);color:#101010;font-weight:bold;font-style:italic;-webkit-text-stroke:0.05px #101010;">Parameters</div>
<div class="t" style="left:453.52px;top:308px;font-size:8.26px;transform:scaleX(0.906);color:#a8a8a8;-webkit-text-stroke:0.18px #a8a8a8;">[3]Closed : Mivoc 3 Gewichte</div>
<div class="t" style="left:452.79px;top:396px;font-size:7.86px;transform:scaleX(0.875);color:#8c8c8c;-webkit-text-stroke:0.18px #8c8c8c;">0,84</div>
<div class="t" style="left:445.47px;top:322px;font-size:8.26px;transform:scaleX(0.809);color:#202020;-webkit-text-stroke:0.18px #202020;">Driver</div>
<div class="t" style="left:471.23px;top:321px;font-size:7.75px;transform:scaleX(0.924);color:#202020;-webkit-text-stroke:0.18px #202020;">Box</div>
<div class="t" style="left:498.16px;top:322px;font-size:8.26px;transform:scaleX(0.824);color:#202020;-webkit-text-stroke:0.18px #202020;">Plot</div>
<div class="t" style="left:523.86px;top:322px;font-size:8.26px;transform:scaleX(0.822);color:#202020;-webkit-text-stroke:0.18px #202020;">Project</div>
<div class="t" style="left:446.77px;top:337px;font-size:7.25px;transform:scaleX(0.904);color:#202020;-webkit-text-stroke:0.18px #202020;">Closed</div>
<div class="t" style="left:564.67px;top:338px;font-size:7.9px;transform:scaleX(0.846);color:#202020;-webkit-text-stroke:0.18px #202020;">Box shape</div>
<div class="t" style="left:450.27px;top:349px;font-size:8.12px;transform:scaleX(0.821);color:#202020;-webkit-text-stroke:0.18px #202020;">Front chamber:</div>
<div class="t" style="left:450.4px;top:359px;font-size:7.97px;transform:scaleX(0.847);color:#2828e8;-webkit-text-stroke:0.18px #2828e8;">Volume:</div>
<div class="t" style="left:452.32px;top:370px;font-size:8.57px;transform:scaleX(0.876);color:#202020;-webkit-text-stroke:0.18px #202020;">65</div>
<div class="t" style="left:450.51px;top:384px;font-size:7.97px;transform:scaleX(0.897);color:#2828e8;-webkit-text-stroke:0.18px #2828e8;">Qtc:</div>
<div class="t" style="left:448.75px;top:438px;font-size:5.07px;transform:scaleX(0.889);color:#101010;font-weight:bold;font-style:italic;-webkit-text-stroke:0.05px #101010;">Parameters</div>

<svg class="a" style="left:0;top:461px" width="640" height="19">
 <!-- windows logo -->
 <path d="M6,5.6 L10.6,5 V9.3 H6Z M11.4,4.9 L16.4,4.2 V9.3 H11.4Z M6,10.1 H10.6 V14.4 L6,13.8Z M11.4,10.1 H16.4 V15.2 L11.4,14.5Z" fill="#fff"/>
 <circle cx="33.5" cy="9.6" r="4.2" fill="none" stroke="#fff" stroke-width="1.1"/>
 <rect x="52.5" y="5.2" width="8.5" height="9" fill="none" stroke="#fff" stroke-width="0.9"/>
 <path d="M50.4,6.2V13.2 M63.1,6.2V13.2" stroke="#fff" stroke-width="0.9"/>
 <!-- edge -->
 <path d="M85,10.6 H77.8 C78,13 79.6,14.2 82,14.2 C83.2,14.2 84.2,13.9 85,13.4 V14.6 C84.2,15 83,15.2 81.6,15.2 C78,15.2 75.8,13 75.8,9.8 C75.8,6.8 78,4.8 80.8,4.8 C83.6,4.8 85.2,6.6 85.2,9.4Z M77.9,9.1 H83.1 C83,7.3 82.2,6.3 80.6,6.3 C79.1,6.3 78.1,7.5 77.9,9.1Z" fill="#1e8ce6"/>
 <!-- store -->
 <path d="M99.2,7.2 H107.6 V15 H99.2Z" fill="#fff"/>
 <path d="M101,7.2 C101,4 105.8,4 105.8,7.2" fill="none" stroke="#fff" stroke-width="0.9"/>
 <path d="M101.2,9.2 H103.1 V11 H101.2Z M103.8,9.2 H105.6 V11 H103.8Z M101.2,11.6 H103.1 V13.4 H101.2Z M103.8,11.6 H105.6 V13.4 H103.8Z" fill="#000"/>
 <!-- explorer -->
 <path d="M121.8,5.4 H126 L127,6.6 H131.8 V14.4 H121.8Z" fill="#f2c94c"/>
 <path d="M121.8,8.4 H131.8 V14.4 H121.8Z" fill="#e8b830"/>
 <path d="M124.5,14.4 V11.2 H129.2 V14.4" fill="none" stroke="#3aa0e0" stroke-width="1.3"/>
 <!-- mail -->
 <path d="M145,8.2 L150,5.2 L155,8.2 V14 H145Z" fill="#fff"/>
 <path d="M145,8.4 L150,11.6 L155,8.4" fill="none" stroke="#000" stroke-width="0.8"/>
 <!-- calculator -->
 <rect x="169.2" y="4.2" width="7.6" height="10.6" fill="#e8e8e8"/>
 <path d="M170.2,6.9H175.8 M170.2,8.9H175.8 M170.2,10.9H175.8 M170.2,12.9H175.8 M172,6.9V14 M174,6.9V14" stroke="#505050" stroke-width="0.5"/>
 <!-- kodi -->
 <path d="M195.8,5.6 L200.6,10.4 L195.8,15.2 L191,10.4Z" fill="#30a8e0"/>
 <path d="M194.4,8 V12.8 M194.4,10.4 L197,8 M194.4,10.4 L197,12.8" stroke="#fff" stroke-width="0.9"/>
 <!-- grey diamond -->
 <path d="M219,6.8 L222.5,10.3 L219,13.8 L215.5,10.3Z" fill="#9a9a9a"/>
 <!-- active button icon -->
 <path transform="translate(235,3)" d="M7.7,3.5 C6.3,3.6 6.0,4.8 6.6,5.4 C7.6,6.1 8.3,6.6 7.3,7.3 C6.3,7.9 4.7,7.9 3.9,8.8 C3.3,9.4 3.0,10.2 2.9,10.8" fill="none" stroke="#000" stroke-width="1.7" stroke-linecap="round"/>
 <!-- tray caret -->
 <path d="M388.6,12.6 L392.2,8.6 L395.8,12.6" fill="none" stroke="#f0f0f0" stroke-width="1.2"/>
 <!-- bluetooth -->
 <ellipse cx="407.2" cy="10" rx="3.5" ry="4.6" fill="#1040a0"/>
 <path d="M405.6,7.8 L409,11.6 L407.3,13.2 V6.6 L409,8.4 L405.6,12.2" fill="none" stroke="#fff" stroke-width="0.8"/>
 <!-- plex -->
 <rect x="417.5" y="5" width="9.5" height="9.6" fill="#303030"/>
 <path d="M420.8,6.6 L423.6,9.8 L420.8,13" fill="none" stroke="#e8a020" stroke-width="1.6"/>
 <!-- nvidia -->
 <rect x="432.5" y="5" width="9.4" height="9.6" fill="#383838"/>
 <path d="M433.2,10.8 C435,7 439.6,7 441.4,9.4 C440,12.4 435.6,13.2 433.2,10.8Z" fill="#76b900"/><path d="M435.6,10.6 C436.4,9 438.6,9 439.4,10 C438.6,11.4 436.6,11.6 435.6,10.6Z" fill="#2a3a10"/>
 <!-- gamepad -->
 <path d="M448.2,12.2 L449.2,7.6 C449.6,6.4 451,6.2 452.4,6.8 C453.8,6.2 455.2,6.4 455.6,7.6 L456.6,12.2 C456,13 455,12.8 454.4,12 L452.4,10.6 L450.4,12 C449.8,12.8 448.8,13 448.2,12.2Z" fill="#f0f0f0"/>
 <path d="M453.4,10.8 L456.8,14.2 M456.8,10.8 L453.4,14.2" stroke="#e01010" stroke-width="1.2"/>
 <!-- colourful -->
 <rect x="476.6" y="4" width="10.6" height="10.6" fill="#d8a020"/>
 <rect x="477.6" y="5" width="4" height="5" fill="#e03020"/>
 <rect x="481.6" y="5" width="4.6" height="4" fill="#2050c0"/>
 <rect x="477.6" y="10" width="4.6" height="3.6" fill="#f0e020"/>
 <rect x="482.2" y="9" width="4" height="4.6" fill="#20a040"/>
 <!-- speaker -->
 <path d="M492,8.2 H494 L496.6,5.8 V14.2 L494,11.8 H492Z" fill="none" stroke="#fff" stroke-width="0.8"/>
 <path d="M498.2,7.8 C499.2,9 499.2,11 498.2,12.2 M500,6.6 C501.6,8.4 501.6,11.6 500,13.4 M501.8,5.6 C504,8 504,12 501.8,14.4" fill="none" stroke="#fff" stroke-width="0.7"/>
 <!-- network monitor -->
 <rect x="507" y="5.4" width="10.6" height="6.6" fill="none" stroke="#fff" stroke-width="0.9"/>
 <path d="M512.3,12 V13.8 M509.6,14.2 H515" stroke="#fff" stroke-width="0.9"/>
 <!-- chain -->
 <path d="M526,12.6 C524.4,11 526.6,8.8 528.4,10 M532.8,7 C534.6,8.8 532.4,11 530.6,9.8 M527,13.6 L533.8,6.2" fill="none" stroke="#fff" stroke-width="1"/>
 <!-- keyboard -->
 <rect x="542.6" y="5.4" width="14" height="8.2" rx="1" fill="none" stroke="#e8e8e8" stroke-width="0.9"/>
 <path d="M544.4,8H554.8 M544.4,10H554.8 M546.5,12H552.6" stroke="#c8c8c8" stroke-width="0.7" stroke-dasharray="1 0.6"/>
 <!-- notification -->
 <path d="M614.2,4.8 H624.6 V12.6 H620.6 L619.2,14.2 L617.8,12.6 H614.2Z" fill="#fff"/>
 <path d="M615.8,7 H622.8 M615.8,8.8 H622.8 M615.8,10.6 H620.4" stroke="#000" stroke-width="0.7"/>
 <path d="M638.4,0V19" stroke="#505050" stroke-width="0.8"/>
</svg>
</body></html>
